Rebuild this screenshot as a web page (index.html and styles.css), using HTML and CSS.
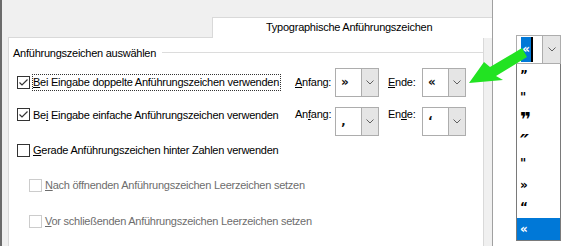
FILE: index.html
```html
<!DOCTYPE html>
<html lang="de">
<head>
    <meta charset="UTF-8">
    <title>Typographische Anführungszeichen</title>
    <link rel="stylesheet" href="styles.css">
</head>
<body>
    <div class="screen">
        <div class="dialog">
            <div class="tabs">
                <div class="tab">Typographische Anführungszeichen</div>
            </div>
            <div class="panel">
                <div class="group-title">
                    <span>Anführungszeichen auswählen</span>
                    <span class="rule"></span>
                </div>

                <div class="row row-one">
                    <span class="check checked"><svg viewBox="0 0 11 11"><polyline points="1.5,5.5 4,8 9.5,2.5"/></svg></span>
                    <div class="label-cell"><span class="label focus"><u>B</u>ei Eingabe doppelte Anführungszeichen verwenden</span></div>
                    <span class="field-label"><u>A</u>nfang:</span>
                    <span class="combo"><span class="combo-value">»</span><span class="combo-btn"><svg viewBox="0 0 8 5"><polyline points="0.5,0.5 4,4 7.5,0.5"/></svg></span></span>
                    <span class="field-label end"><u>E</u>nde:</span>
                    <span class="combo"><span class="combo-value">«</span><span class="combo-btn"><svg viewBox="0 0 8 5"><polyline points="0.5,0.5 4,4 7.5,0.5"/></svg></span></span>
                </div>

                <div class="row row-two">
                    <span class="check checked"><svg viewBox="0 0 11 11"><polyline points="1.5,5.5 4,8 9.5,2.5"/></svg></span>
                    <div class="label-cell"><span class="label">Be<u>i</u> Eingabe einfache Anführungszeichen verwenden</span></div>
                    <span class="field-label">An<u>f</u>ang:</span>
                    <span class="combo"><span class="combo-value">‚</span><span class="combo-btn"><svg viewBox="0 0 8 5"><polyline points="0.5,0.5 4,4 7.5,0.5"/></svg></span></span>
                    <span class="field-label end">En<u>d</u>e:</span>
                    <span class="combo"><span class="combo-value">‘</span><span class="combo-btn"><svg viewBox="0 0 8 5"><polyline points="0.5,0.5 4,4 7.5,0.5"/></svg></span></span>
                </div>

                <div class="row row-three">
                    <span class="check"></span>
                    <span class="label"><u>G</u>erade Anführungszeichen hinter Zahlen verwenden</span>
                </div>

                <div class="row row-four sub disabled">
                    <span class="check"></span>
                    <span class="label"><u>N</u>ach öffnenden Anführungszeichen Leerzeichen setzen</span>
                </div>

                <div class="row row-five sub disabled">
                    <span class="check"></span>
                    <span class="label"><u>V</u>or schließenden Anführungszeichen Leerzeichen setzen</span>
                </div>
            </div>
        </div>

        <div class="side">
            <div class="side-combo">
                <span class="side-value"><span class="selected-text">«</span><span class="caret"></span></span>
                <span class="combo-btn"><svg viewBox="0 0 8 5"><polyline points="0.5,0.5 4,4 7.5,0.5"/></svg></span>
            </div>
            <ul class="quote-list">
                <li class="q1">”</li>
                <li class="q2">"</li>
                <li class="q3">❞</li>
                <li class="q4">″</li>
                <li class="q5">"</li>
                <li class="q6">»</li>
                <li class="q7">“</li>
                <li class="q8 active">«</li>
            </ul>
        </div>

        <!-- green pointer over the screenshot -->
        <svg class="arrow" viewBox="0 0 580 246">
            <polygon points="469,83 484,62 490,67 522,48 527,57 496,76 503,80"/>
        </svg>
    </div>
</body>
</html>
```

FILE: styles.css
```css
/* Global */
body {
    margin: 0;
    padding: 0;
    font-family: "Liberation Sans", Arial, sans-serif;
    font-size: 11px;
    letter-spacing: -0.25px;
    color: #000;
    background-color: #fff;
}

.screen {
    position: relative;
    display: flex;
    width: 580px;
    height: 246px;
    overflow: hidden;
}

/* Dialog */
.dialog {
    box-sizing: border-box;
    width: 493px;
    height: 246px;
    display: flex;
    flex-direction: column;
    background-color: #f0f0f0;
    border-left: 2px solid #6b6b6b;
    border-right: 1px solid #a0a0a0;
}

.tabs {
    display: flex;
    margin-top: 17px;
    padding-left: 210px;
}

.tab {
    flex: 1;
    box-sizing: border-box;
    height: 21px;
    margin-bottom: -1px;
    padding-left: 53px;
    line-height: 18px;
    background-color: #fff;
    border-top: 1px solid #d9d9d9;
    border-left: 1px solid #d9d9d9;
    position: relative;
    z-index: 1;
}

.panel {
    flex: 1;
    box-sizing: border-box;
    width: 476px;
    margin-left: 6px;
    background-color: #fff;
    border: 1px solid #d9d9d9;
    border-bottom: none;
}

.group-title {
    display: flex;
    align-items: center;
    gap: 6px;
    height: 15px;
    margin: 7px 0 0 4px;
}

.group-title .rule {
    flex: 1;
    height: 1px;
    background-color: #dcdcdc;
}

/* Rows */
.row {
    display: flex;
    align-items: center;
    padding-left: 8px;
    line-height: 15px;
}

.row-one {
    height: 29px;
    margin-top: 8px;
}

.row-two {
    align-items: flex-start;
    margin-top: 10px;
}

.row-two .check {
    margin-top: 1px;
}

.row-three {
    margin-top: 6px;
}

.row-four {
    margin-top: 18px;
}

.row-five {
    margin-top: 19px;
}

.row.sub {
    padding-left: 20px;
}

.check {
    box-sizing: border-box;
    width: 13px;
    height: 13px;
    margin-right: 2px;
    border: 1px solid #333;
    background-color: #fff;
    flex-shrink: 0;
}

.check svg {
    display: block;
    width: 11px;
    height: 11px;
    fill: none;
    stroke: #333;
    stroke-width: 1.2;
}

.label {
    display: inline-block;
    border: 1px dotted transparent;
    padding-right: 1px;
    white-space: nowrap;
    letter-spacing: -0.25px;
}

.label.focus {
    border-color: #333;
}

.label-cell {
    width: 263px;
    flex-shrink: 0;
}

.disabled .label {
    color: #6d6d6d;
}

.disabled .check {
    border-color: #cccccc;
}

.field-label {
    width: 40px;
    flex-shrink: 0;
}

.field-label.end {
    width: 34px;
    margin-left: 9px;
}

/* Combo boxes */
.combo {
    display: flex;
    box-sizing: border-box;
    width: 44px;
    height: 29px;
    border: 1px solid #adadad;
    background-color: #fff;
    flex-shrink: 0;
}

.combo-value {
    flex: 1;
    padding-left: 5px;
    font-family: "DejaVu Sans", sans-serif;
    font-weight: bold;
    font-size: 12px;
    letter-spacing: 0;
    line-height: 27px;
    color: #111;
}

.combo-btn {
    display: flex;
    align-items: center;
    justify-content: center;
    width: 16px;
    background-color: #e5e5e5;
    border-left: 1px solid #adadad;
}

.combo-btn svg {
    width: 8px;
    height: 5px;
    fill: none;
    stroke: #606060;
    stroke-width: 1;
}

/* Open drop-down on the right */
.side {
    flex: 1;
    padding: 35px 0 0 23px;
    background-color: #fff;
}

.side-combo {
    display: flex;
    box-sizing: border-box;
    width: 45px;
    height: 29px;
    border: 1px solid #adadad;
    background-color: #fff;
}

.side-value {
    flex: 1;
    display: flex;
    padding: 1px 0 1px 4px;
}

.selected-text {
    width: 10px;
    background-color: #0078d7;
    color: #fff;
    font-family: "DejaVu Sans", sans-serif;
    font-weight: bold;
    font-size: 12px;
    line-height: 25px;
    text-align: center;
}

.caret {
    width: 2px;
    background-color: #000;
}

.side-combo .combo-btn {
    width: 17px;
}

.quote-list {
    list-style: none;
    margin: 0;
    padding: 0;
    box-sizing: border-box;
    width: 45px;
    border: 1px solid #7a7a7a;
    border-top: none;
}

.quote-list li {
    height: 22px;
    padding-left: 3px;
    font-family: "DejaVu Sans", sans-serif;
    font-weight: bold;
    font-size: 12px;
    letter-spacing: 0;
    line-height: 22px;
}

.quote-list .q3 {
    font-size: 19px;
}

.quote-list .q4 {
    font-size: 20px;
    font-style: italic;
}

.quote-list .active {
    background-color: #0078d7;
    color: #fff;
}

/* Green pointer */
.arrow {
    position: absolute;
    top: 0;
    left: 0;
    width: 580px;
    height: 246px;
    pointer-events: none;
}

.arrow polygon {
    fill: #22e322;
}
```
